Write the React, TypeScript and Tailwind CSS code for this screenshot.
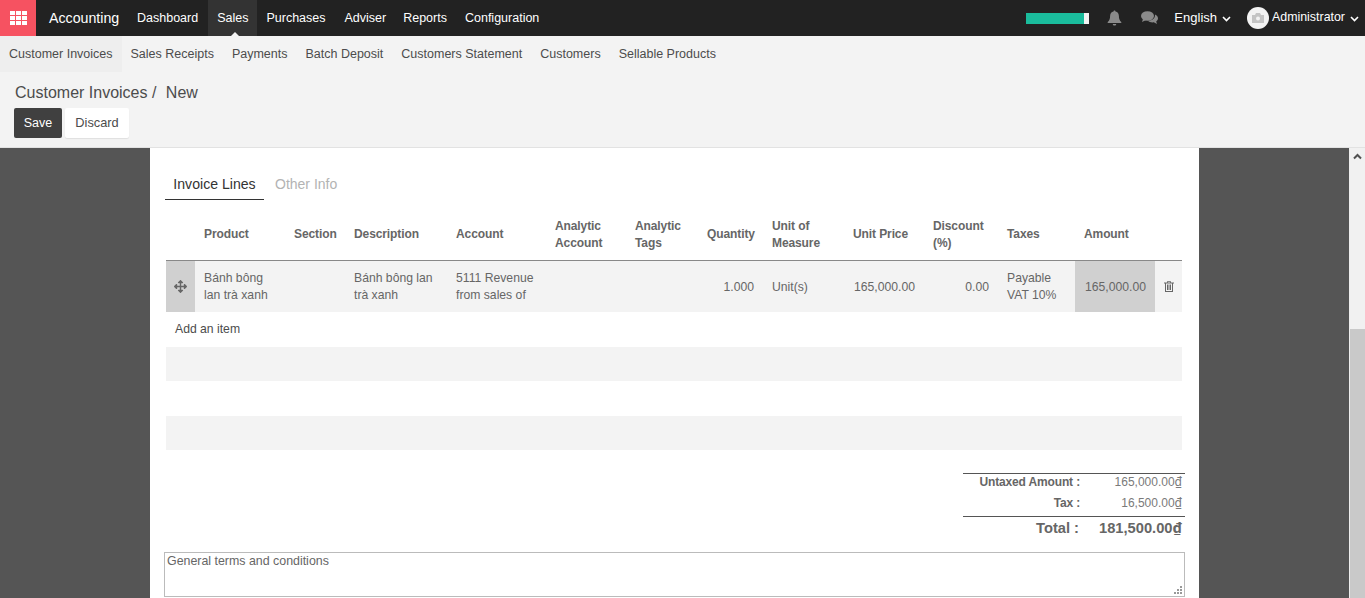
import React from "react";
import { FaArrowsAlt } from "react-icons/fa";

const nav = [
  { n: "Dashboard", c: "pl-[9px] pr-[10px]" },
  { n: "Sales", c: "pl-[9px] pr-[9px] bg-[#333333]" },
  { n: "Purchases", c: "pl-[9px] pr-[10px]" },
  { n: "Adviser", c: "pl-[9px] pr-[8px]" },
  { n: "Reports", c: "pl-[9px] pr-[9px]" },
  { n: "Configuration", c: "pl-[9px] pr-[9px]" },
];
const sub = ["Customer Invoices", "Sales Receipts", "Payments", "Batch Deposit", "Customers Statement", "Customers", "Sellable Products"];

function Chevron() {
  return (
    <svg width="9" height="6" viewBox="0 0 9 6" className="ml-[5px] mt-[2px]">
      <path d="M1 1l3.500 3.500L8 1" fill="none" stroke="currentColor" strokeWidth="1.600" />
    </svg>
  );
}

function Dong() {
  return <span className="font-['Noto_Sans',sans-serif]">₫</span>;
}

export default function App() {
  return (
    <div className="h-[598px] w-[1365px] overflow-hidden flex flex-col font-['Liberation_Sans',Arial,sans-serif] text-[12.4px] text-[#4c4c4c]">
      <header className="h-9 shrink-0 bg-[#222222] flex items-stretch text-white text-[12.5px]">
        <div className="w-9 bg-[#f65261] flex items-center justify-center">
          <svg width="17" height="14" viewBox="0 0 17 14" fill="#fff">
            {[0, 5, 10].map((y) =>
              [0, 6, 12].map((x) => <rect key={`${x}-${y}`} x={x} y={y} width="5" height="4" />)
            )}
          </svg>
        </div>
        <div className="ml-[13px] w-[79px] text-[14.200px] leading-9">Accounting</div>
        {nav.map(({ n, c }) => (
          <div key={n} className={`relative leading-9 ${c}`}>
            {n}
            {n === "Sales" && (
              <span className="absolute left-1/2 -ml-[2px] bottom-0 border-x-[4px] border-b-[4px] border-x-transparent border-b-[#f3f3f3]" />
            )}
          </div>
        ))}
        <div className="ml-auto flex items-center">
          <div className="w-[63px] h-[11px] bg-[#f3f3f3] mr-[18px]">
            <div className="w-[58px] h-full bg-[#1abc9c]" />
          </div>
          <svg width="15" height="16" viewBox="0 0 15 16" fill="#8a8a8a" className="mr-[19px]">
            <path d="M7.500 0.500c.7 0 1 .5 1 1 2.200.5 3.400 2.200 3.400 4.600 0 3 .8 4.600 2.400 6v1H.7v-1c1.600-1.400 2.400-3 2.400-6 0-2.400 1.200-4.100 3.400-4.600 0-.5.3-1 1-1zM5.800 14h3.400c0 1-.7 1.600-1.700 1.600S5.800 15 5.800 14z" />
          </svg>
          <svg width="17" height="14" viewBox="0 0 17 14" fill="#8a8a8a" className="mr-[16px]">
            <ellipse cx="6.500" cy="5" rx="6.500" ry="4.800" />
            <path d="M2 8l-1 3 4-2z" />
            <path d="M14 3.500c1.800.8 3 2.200 3 3.800 0 1.300-.7 2.400-1.800 3.200l.8 2.500-3.200-1.700c-2.300.4-4.500-.3-5.800-1.600 3.800.2 7.200-2 7-6.200z" />
          </svg>
          <span className="text-[13px]">English</span>
          <Chevron />
          <div className="ml-[16px] w-[22px] h-[22px] rounded-full bg-[#f3f3f3] flex items-center justify-center">
            <svg width="12" height="10" viewBox="0 0 12 10" fill="#c4c4c4">
              <path d="M0 2h3l1-2h4l1 2h3v8H0z" />
              <circle cx="6" cy="5.500" r="2" fill="#f3f3f3" />
            </svg>
          </div>
          <span className="ml-[3px] -mt-[2px] text-[12.4px]">Administrator</span>
          <Chevron />
          <span className="w-[6px]" />
        </div>
      </header>

      <nav className="h-9 shrink-0 bg-[#f3f3f3] flex text-[12.5px] text-[#4c4c4c]">
        {sub.map((s, i) => (
          <div key={s} className={`px-[9px] leading-9 ${i === 0 ? "bg-[#eeeeee]" : ""}`}>
            {s}
          </div>
        ))}
      </nav>

      <div className="h-[76px] shrink-0 bg-[#f3f3f3] border-b border-[#e2e2e2] px-[14px]">
        <div className="text-[16px] leading-[24px] pt-[8px] h-[36px] translate-y-px">
          <span className="ml-px">Customer Invoices</span>
          <span> / </span>
          <span className="ml-[5px]">New</span>
        </div>
        <div className="flex gap-[3px]">
          <button className="h-[30px] w-[48px] rounded-[2px] bg-[#404040] text-white text-[12.5px]">Save</button>
          <button className="h-[30px] w-[64px] rounded-[2px] bg-white text-[#4c4c4c] text-[12.800px] shadow-[0_1px_1px_rgba(0,0,0,0.08)]">Discard</button>
        </div>
      </div>

      <div className="flex-1 min-h-0 flex">
        <div className="flex-1 bg-[#555555] flex min-w-0">
          <main className="ml-[150px] w-[1049px] bg-white pl-[15px] pt-[21px] h-full overflow-hidden">
            <div className="flex h-[31px] text-[14px]">
              <div className="w-[99px] text-center text-[14.100px] leading-[30px] border-b border-[#333333] text-[#333333]">Invoice Lines</div>
              <div className="ml-[11px] leading-[30px] text-[#b3b3b3]">Other Info</div>
            </div>

            <table className="ml-px mt-[10px] w-[1016px] table-fixed border-collapse text-[12.200px] text-[#666666]">
              <colgroup>
                <col className="w-[29px]" />
                <col className="w-[90px]" />
                <col className="w-[60px]" />
                <col className="w-[102px]" />
                <col className="w-[99px]" />
                <col className="w-[80px]" />
                <col className="w-[72px]" />
                <col className="w-[65px]" />
                <col className="w-[81px]" />
                <col className="w-[80px]" />
                <col className="w-[74px]" />
                <col className="w-[77px]" />
                <col className="w-[80px]" />
                <col className="w-[27px]" />
              </colgroup>
              <thead>
                <tr className="h-[50px] border-b border-[#888888] font-bold text-[12px] tracking-[-0.1px] leading-[17px]">
                  <th />
                  <th className="px-[9px] text-left">Product</th>
                  <th className="px-[9px] text-left">Section</th>
                  <th className="px-[9px] text-left">Description</th>
                  <th className="px-[9px] text-left">Account</th>
                  <th className="px-[9px] text-left">Analytic Account</th>
                  <th className="px-[9px] text-left">Analytic Tags</th>
                  <th className="px-[9px] text-right">Quantity</th>
                  <th className="px-[9px] text-left">Unit of Measure</th>
                  <th className="px-[9px] text-left">Unit Price</th>
                  <th className="px-[9px] text-left">Discount (%)</th>
                  <th className="px-[9px] text-left">Taxes</th>
                  <th className="px-[9px] text-left">Amount</th>
                  <th />
                </tr>
              </thead>
              <tbody>
                <tr className="h-[52px] bg-[#f3f3f3] leading-[17px]">
                  <td className="bg-[#d0d0d0] text-center">
                    <FaArrowsAlt size={13} color="#666" className="inline-block" />
                  </td>
                  <td className="px-[9px] pt-[2px]">Bánh bông lan trà xanh</td>
                  <td />
                  <td className="px-[9px] pt-[2px]">Bánh bông lan trà xanh</td>
                  <td className="px-[9px] pt-[2px]">5111 Revenue from sales of</td>
                  <td />
                  <td />
                  <td className="px-[9px] pt-[2px] text-right">1.000</td>
                  <td className="px-[9px] pt-[2px]">Unit(s)</td>
                  <td className="px-[9px] pt-[2px] text-right">165,000.00</td>
                  <td className="px-[9px] pt-[2px] text-right">0.00</td>
                  <td className="px-[9px] pt-[2px]">Payable VAT 10%</td>
                  <td className="bg-[#d0d0d0] px-[9px] pt-[2px] text-right">165,000.00</td>
                  <td className="text-center">
                    <svg width="10" height="11" viewBox="0 0 10 11" fill="#666" className="inline-block">
                      <path d="M3.500 0h3l.6 1.500H10v1H9V11H1V2.500H0v-1h2.900zM4 .8l-.2.7h2.400L6 .8zM2 2.500V10h6V2.500zM3 3.500h1V9H3zm1.500 0h1V9h-1zm1.500 0h1V9H6z" fillRule="evenodd" />
                    </svg>
                  </td>
                </tr>
                <tr className="h-[35px]">
                  <td colSpan={14} className="pl-[9px] text-[#4c4c4c]">Add an item</td>
                </tr>
                <tr className="h-[34px] bg-[#f3f3f3]"><td colSpan={14} /></tr>
                <tr className="h-[35px]"><td colSpan={14} /></tr>
                <tr className="h-[34px] bg-[#f3f3f3]"><td colSpan={14} /></tr>
              </tbody>
            </table>

            <div className="ml-[798px] mt-[23px] w-[222px] pb-[1px] text-[#666666]">
              <div className="border-t border-[#555555] h-[44px] border-b">
                <div className="flex h-[16px] items-center pr-[3px]">
                  <span className="w-[117px] text-right font-bold text-[12px] tracking-[-0.15px]">Untaxed Amount :</span>
                  <span className="flex-1 text-right text-[12px] text-[#7a7a7a]">165,000.00<Dong /></span>
                </div>
                <div className="flex h-[26px] items-center pr-[3px]">
                  <span className="w-[117px] text-right font-bold text-[12px] tracking-[-0.15px]">Tax :</span>
                  <span className="flex-1 text-right text-[12px] text-[#7a7a7a]">16,500.00<Dong /></span>
                </div>
              </div>
              <div className="flex h-[22px] items-center pr-[3px] text-[14.700px] font-bold">
                <span className="w-[116px] text-right">Total :</span>
                <span className="flex-1 text-right">181,500.00<Dong /></span>
              </div>
            </div>

            <div className="relative -ml-px mt-[12px] w-[1021px] h-[45px] border border-[#bbbbbb] px-[2px] text-[#666666] leading-[15px] pt-px">
              General terms and conditions
              <svg width="9" height="9" viewBox="0 0 9 9" fill="#999" className="absolute right-[1px] bottom-[1px]">
                <rect x="6" y="0" width="2" height="2" />
                <rect x="3" y="3" width="2" height="2" />
                <rect x="6" y="3" width="2" height="2" />
                <rect x="0" y="6" width="2" height="2" />
                <rect x="3" y="6" width="2" height="2" />
                <rect x="6" y="6" width="2" height="2" />
              </svg>
            </div>
          </main>
        </div>
        <div className="w-4 shrink-0 bg-[#f1f1f1] flex flex-col border-l border-[#eeeeee]">
          <div className="h-[181px] flex justify-center pt-[5px]">
            <svg width="9" height="7" viewBox="0 0 9 7">
              <path d="M1 5.500l3.500-3.500L8 5.500" fill="none" stroke="#505050" strokeWidth="2" />
            </svg>
          </div>
          <div className="flex-1 bg-[#c9c9c9]" />
        </div>
      </div>
    </div>
  );
}
